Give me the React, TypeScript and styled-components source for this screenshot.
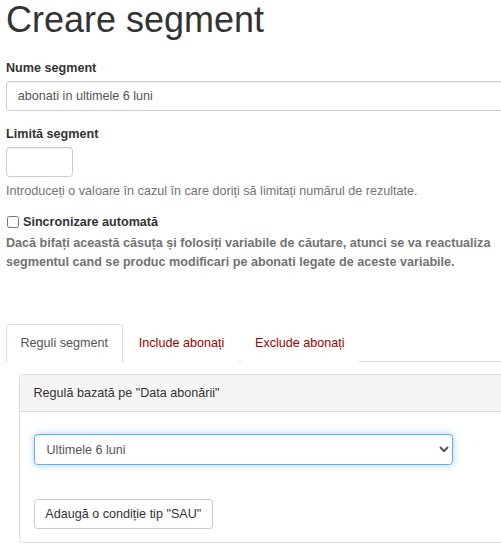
import styled, { createGlobalStyle } from 'styled-components';

const GlobalStyle = createGlobalStyle`
  html, body {
    margin: 0;
    padding: 0;
    background: #fff;
    overflow-x: hidden;
  }
  body {
    font-family: "Liberation Sans", Arial, Helvetica, sans-serif;
    font-size: 12.6px;
    line-height: 18px;
    color: #333;
  }
  * {
    box-sizing: border-box;
  }
`;

const Page = styled.div`
  width: 536px;
  padding-left: 6px;
`;

const Title = styled.h1`
  margin: 0 0 18.6px;
  font-size: 36px;
  font-weight: 400;
  line-height: 40px;
  color: #333;
`;

const FormGroup = styled.div`
  margin-bottom: 13.5px;
`;

const Label = styled.label`
  display: block;
  margin-bottom: 4px;
  font-weight: 700;
`;

const TextInput = styled.input<{ $width?: number }>`
  display: block;
  width: ${({ $width }) => ($width ? `${$width}px` : '100%')};
  height: 30.6px;
  padding: 5.4px 10.8px;
  font-family: inherit;
  font-size: 12.6px;
  color: #555;
  background: #fff;
  border: 1px solid #ccc;
  border-radius: 3.6px;
  box-shadow: inset 0 1px 1px rgba(0, 0, 0, 0.075);
  outline: none;
`;

const HelpText = styled.p`
  margin: 4.5px 0 0;
  color: #737373;
`;

const CheckLabel = styled.label`
  display: flex;
  align-items: center;
  gap: 4px;
  font-weight: 700;
`;

const CheckBox = styled.input`
  width: 12px;
  height: 12px;
  margin: 0 0 0 1px;
`;

const Description = styled.p`
  margin: 3px 0 0;
  color: #737373;
  font-weight: 700;
  line-height: 19px;
`;

const Tabs = styled.ul`
  display: flex;
  margin: 52px 0 0;
  padding: 0;
  list-style: none;
  border-bottom: 1px solid #ddd;
`;

const Tab = styled.li<{ $active?: boolean }>`
  margin: 0 1.8px -1px 0;
  padding: 9px 13.5px;
  line-height: 18px;
  border: 1px solid ${({ $active }) => ($active ? '#ddd' : 'transparent')};
  border-bottom-color: ${({ $active }) => ($active ? '#fff' : 'transparent')};
  border-radius: 3.6px 3.6px 0 0;
  background: #fff;
  color: ${({ $active }) => ($active ? '#555' : '#a30000')};
`;

const Panel = styled.div`
  margin: 12px 0 0 13px;
  border: 1px solid #ddd;
  border-radius: 3.6px;
  box-shadow: 0 1px 1px rgba(0, 0, 0, 0.05);
`;

const PanelHeading = styled.div`
  padding: 9px 13.5px;
  background: #f5f5f5;
  border-bottom: 1px solid #ddd;
  border-radius: 3px 3px 0 0;
`;

const PanelBody = styled.div`
  padding: 22px 13.5px 13px;
`;

const Select = styled.select`
  display: block;
  width: 419px;
  height: 30.6px;
  padding: 0 8px;
  font-family: inherit;
  font-size: 12.6px;
  color: #555;
  background: #fff;
  border: 1px solid #66afe9;
  border-radius: 3.6px;
  box-shadow: inset 0 1px 1px rgba(0, 0, 0, 0.075), 0 0 7px rgba(102, 175, 233, 0.6);
  outline: none;
`;

const Button = styled.button`
  display: inline-block;
  margin-top: 34px;
  height: 30.6px;
  padding: 0 10.8px;
  font-family: inherit;
  font-size: 12.6px;
  color: #333;
  background: #fff;
  border: 1px solid #ccc;
  border-radius: 3.6px;
`;

const tabs = [
  { label: 'Reguli segment', active: true },
  { label: 'Include abonați' },
  { label: 'Exclude abonați' },
];

export default function App() {
  return (
    <>
      <GlobalStyle />
      <Page>
        <Title>Creare segment</Title>

        <FormGroup>
          <Label>Nume segment</Label>
          <TextInput defaultValue="abonati in ultimele 6 luni" />
        </FormGroup>

        <FormGroup>
          <Label>Limită segment</Label>
          <TextInput $width={67} />
          <HelpText>Introduceți o valoare în cazul în care doriți să limitați numărul de rezultate.</HelpText>
        </FormGroup>

        <CheckLabel>
          <CheckBox type="checkbox" />
          Sincronizare automată
        </CheckLabel>
        <Description>
          Dacă bifați această căsuța și folosiți variabile de căutare, atunci se va reactualiza segmentul
          cand se produc modificari pe abonati legate de aceste variabile.
        </Description>

        <Tabs>
          {tabs.map((tab) => (
            <Tab key={tab.label} $active={tab.active}>
              {tab.label}
            </Tab>
          ))}
        </Tabs>

        <Panel>
          <PanelHeading>Regulă bazată pe "Data abonării"</PanelHeading>
          <PanelBody>
            <Select defaultValue="6">
              <option value="6">Ultimele 6 luni</option>
            </Select>
            <Button>Adaugă o condiție tip "SAU"</Button>
          </PanelBody>
        </Panel>
      </Page>
    </>
  );
}
